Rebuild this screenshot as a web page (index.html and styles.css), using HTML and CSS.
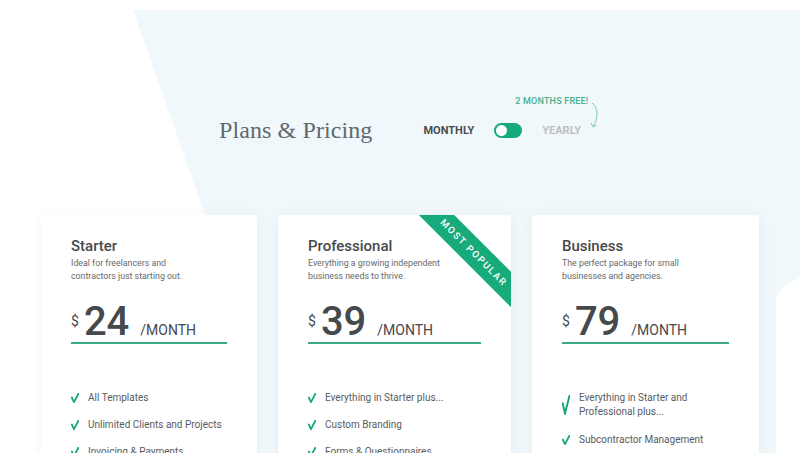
FILE: index.html
```html
<!DOCTYPE html>
<html>
<head>
<meta charset="utf-8">
<title>Plans &amp; Pricing</title>
<link rel="stylesheet" href="styles.css">
</head>
<body>
    <div class="page">
        <div class="hero">
            <h1 class="hero-title">Plans &amp; Pricing</h1>
            <div class="billing">
                <span class="billing-label active">MONTHLY</span>
                <span class="switch"><span class="knob"></span></span>
                <span class="billing-label yearly">YEARLY
                    <span class="promo">2 MONTHS FREE!</span>
                    <svg class="promo-arrow" width="14" height="28" viewBox="0 0 14 28">
                        <path d="M4 1 C 10 5, 11 15, 5 25" fill="none" stroke="#7fc9ae" stroke-width="1"/>
                        <path d="M3 21 L 5 25 L 8.5 23" fill="none" stroke="#7fc9ae" stroke-width="1"/>
                    </svg>
                </span>
            </div>
        </div>

        <div class="plans">
            <div class="plan">
                <h2>Starter</h2>
                <p class="blurb">Ideal for freelancers and<br>contractors just starting out.</p>
                <div class="price"><span class="cur">$</span><span class="amount">24</span><span class="per">/MONTH</span></div>
                <ul class="features">
                    <li><svg class="tick" viewBox="0 0 8 10" preserveAspectRatio="none"><path d="M0.8 4.5 L3 9.2 L7.4 0.6"/></svg>All Templates</li>
                    <li><svg class="tick" viewBox="0 0 8 10" preserveAspectRatio="none"><path d="M0.8 4.5 L3 9.2 L7.4 0.6"/></svg>Unlimited Clients and Projects</li>
                    <li><svg class="tick" viewBox="0 0 8 10" preserveAspectRatio="none"><path d="M0.8 4.5 L3 9.2 L7.4 0.6"/></svg>Invoicing &amp; Payments</li>
                </ul>
            </div>

            <div class="plan">
                <div class="ribbon">MOST POPULAR</div>
                <h2>Professional</h2>
                <p class="blurb">Everything a growing independent<br>business needs to thrive.</p>
                <div class="price"><span class="cur">$</span><span class="amount">39</span><span class="per">/MONTH</span></div>
                <ul class="features">
                    <li><svg class="tick" viewBox="0 0 8 10" preserveAspectRatio="none"><path d="M0.8 4.5 L3 9.2 L7.4 0.6"/></svg>Everything in Starter plus...</li>
                    <li><svg class="tick" viewBox="0 0 8 10" preserveAspectRatio="none"><path d="M0.8 4.5 L3 9.2 L7.4 0.6"/></svg>Custom Branding</li>
                    <li><svg class="tick" viewBox="0 0 8 10" preserveAspectRatio="none"><path d="M0.8 4.5 L3 9.2 L7.4 0.6"/></svg>Forms &amp; Questionnaires</li>
                </ul>
            </div>

            <div class="plan">
                <h2>Business</h2>
                <p class="blurb">The perfect package for small<br>businesses and agencies.</p>
                <div class="price"><span class="cur">$</span><span class="amount">79</span><span class="per">/MONTH</span></div>
                <ul class="features">
                    <li class="two-line"><svg class="tick tall" viewBox="0 0 8 10" preserveAspectRatio="none"><path d="M0.8 4.5 L3 9.2 L7.4 0.6"/></svg>Everything in Starter and<br>Professional plus...</li>
                    <li><svg class="tick" viewBox="0 0 8 10" preserveAspectRatio="none"><path d="M0.8 4.5 L3 9.2 L7.4 0.6"/></svg>Subcontractor Management</li>
                </ul>
            </div>
        </div>
    </div>
</body>
</html>
```

FILE: styles.css
```css
* {
    margin: 0;
    padding: 0;
    box-sizing: border-box;
}

body {
    font-family: Roboto, 'Liberation Sans', sans-serif;
    background: #fff;
    height: 453px;
    overflow: hidden;
}

.page {
    position: relative;
    height: 453px;
    overflow: hidden;
}

/* pale slanted backdrop behind the header and cards */
.page::before {
    content: "";
    position: absolute;
    inset: 0;
    background: #f1f8fb;
    clip-path: polygon(133px 10px, 800px 10px, 800px 453px, 235px 453px, 205px 215px);
    z-index: 0;
}

.page::after {
    content: "";
    position: absolute;
    left: 776px;
    top: 272px;
    width: 200px;
    height: 300px;
    background: #fff;
    border-top-left-radius: 60px 30px;
    z-index: 0;
}

.hero {
    position: relative;
    z-index: 1;
    display: flex;
    justify-content: center;
    align-items: center;
    gap: 51px;
    height: 30px;
    margin-top: 115px;
}

.hero-title {
    font-family: 'Liberation Serif', 'DejaVu Serif', serif;
    font-weight: normal;
    font-size: 24px;
    color: #5d6970;
    letter-spacing: 0.1px;
}

.billing {
    display: flex;
    align-items: center;
    gap: 20px;
}

.billing-label {
    font-size: 11px;
    font-weight: bold;
    color: #bcbfc2;
}

.billing-label.active {
    color: #484c50;
}

.yearly {
    position: relative;
}

.promo {
    position: absolute;
    left: -27px;
    top: -28px;
    white-space: nowrap;
    font-size: 9px;
    font-weight: 500;
    color: #44b08d;
    letter-spacing: 0.2px;
}

.promo-arrow {
    position: absolute;
    left: 46px;
    top: -22px;
}

.switch {
    width: 28px;
    height: 15px;
    border-radius: 8px;
    background: #16a97a;
    display: flex;
    align-items: center;
    padding-left: 2px;
}

.knob {
    width: 11px;
    height: 11px;
    border-radius: 50%;
    background: #fff;
}

.plans {
    position: relative;
    z-index: 1;
    display: grid;
    grid-template-columns: 216px 233px 227px;
    column-gap: 21px;
    padding-left: 41px;
    margin-top: 70px;
}

.plan {
    position: relative;
    overflow: hidden;
    background: #fff;
    border-radius: 3px;
    box-shadow: 0 2px 14px rgba(40, 60, 80, 0.06);
    padding: 22px 30px 0 30px;
    height: 300px;
}

.plan h2 {
    font-size: 15px;
    font-weight: 500;
    color: #46494c;
    line-height: 18px;
}

.blurb {
    margin-top: 2px;
    font-size: 8.8px;
    line-height: 13px;
    color: #66696c;
}

.price {
    display: flex;
    align-items: baseline;
    margin-top: 19px;
    border-bottom: 2px solid #38a886;
    color: #46494c;
}

.cur {
    font-size: 14px;
    position: relative;
    top: -9px;
    margin-right: 5px;
}

.amount {
    font-size: 40px;
    line-height: 40px;
    font-weight: 500;
}

.per {
    font-size: 14px;
    margin-left: 11px;
}

.features {
    list-style: none;
    margin-top: 47px;
}

.features li {
    display: flex;
    align-items: center;
    gap: 9px;
    font-size: 10px;
    line-height: 14px;
    color: #595c60;
    margin-bottom: 13px;
}

.features li.two-line {
    margin-bottom: 14px;
}

.tick {
    width: 8px;
    height: 10px;
    flex-shrink: 0;
    fill: none;
    stroke: #17a67a;
    stroke-width: 1.8;
    stroke-linecap: round;
    stroke-linejoin: round;
}

.tick.tall {
    height: 20px;
}

.ribbon {
    position: absolute;
    left: 116px;
    top: 25px;
    width: 160px;
    height: 25px;
    line-height: 25px;
    background: #17ab7c;
    color: #fff;
    text-align: center;
    font-size: 9.5px;
    font-weight: 500;
    letter-spacing: 1.6px;
    transform: rotate(45deg);
}
```
